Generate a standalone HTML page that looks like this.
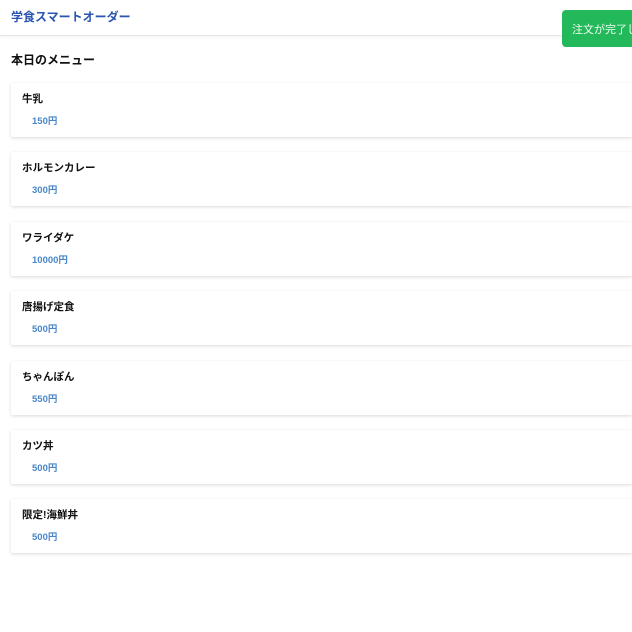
<!DOCTYPE html>
<html><head><meta charset="utf-8"><style>
*{margin:0;padding:0;box-sizing:border-box}
html,body{width:632px;height:632px;overflow:hidden}
body{background:#fff;font-family:"Liberation Sans","Noto Sans CJK JP",sans-serif;position:relative}
.hdr{height:36px;border-bottom:1px solid #e6e6e6;box-shadow:0 1px 3px rgba(0,0,0,.06);padding:8px 11px;font-size:12px;font-weight:bold;color:#2b55b0}
h2{position:absolute;left:11px;top:51px;font-size:12px;font-weight:bold;color:#111}
.card{position:absolute;left:11px;right:0;height:54px;background:#fff;box-shadow:0 1px 3px rgba(0,0,0,.15);border-radius:2px 0 0 2px}
.n{position:absolute;left:11px;top:8px;font-size:10.5px;font-weight:bold;color:#111}
.p{position:absolute;left:21px;top:30px;font-size:9.5px;font-weight:bold;color:#4a86c8}
.toast{position:absolute;left:562px;right:0;top:10px;height:37px;background:#23b85a;border-radius:4px 0 0 4px;color:#eafff0;font-size:11px;padding:11px 10px;white-space:nowrap;overflow:hidden}
</style></head><body>
<div class="hdr">学食スマートオーダー</div>
<h2>本日のメニュー</h2>
<div class="card" style="top:83px"><div class="n">牛乳</div><div class="p">150円</div></div>
<div class="card" style="top:152px"><div class="n">ホルモンカレー</div><div class="p">300円</div></div>
<div class="card" style="top:222px"><div class="n">ワライダケ</div><div class="p">10000円</div></div>
<div class="card" style="top:291px"><div class="n">唐揚げ定食</div><div class="p">500円</div></div>
<div class="card" style="top:361px"><div class="n">ちゃんぽん</div><div class="p">550円</div></div>
<div class="card" style="top:430px"><div class="n">カツ丼</div><div class="p">500円</div></div>
<div class="card" style="top:499px"><div class="n">限定!海鮮丼</div><div class="p">500円</div></div>
<div class="toast">注文が完了しました</div>
</body></html>
